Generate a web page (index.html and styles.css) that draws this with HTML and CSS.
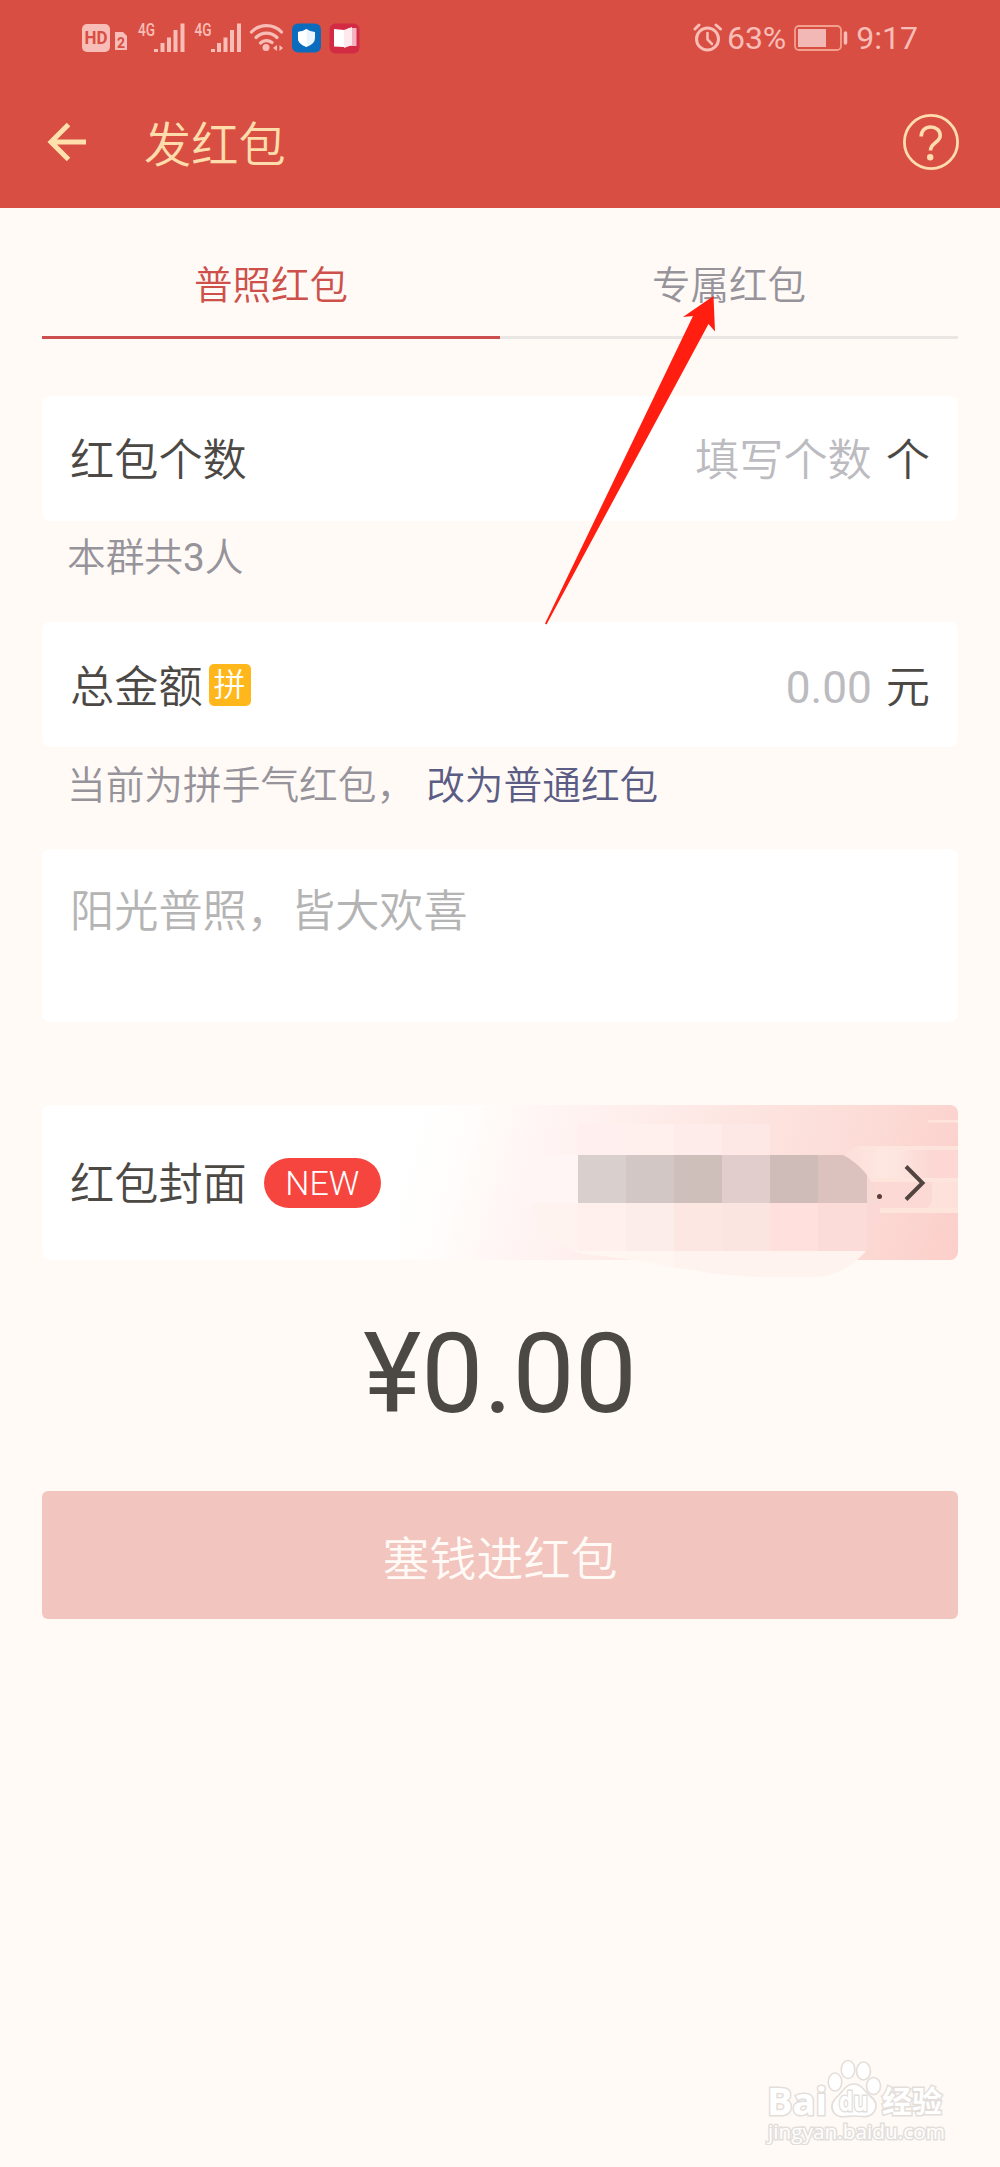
FILE: index.html
```html
<!DOCTYPE html>
<html lang="zh-CN">
<head>
<meta charset="utf-8">
<title>发红包</title>
<link rel="stylesheet" href="styles.css">
</head>
<body>
<div class="screen">
  <header class="header">
    <div class="status">
      <svg class="status-icons" width="300" height="44" viewBox="70 16 300 44">
        <g fill="#f8bdb6">
          <rect x="82" y="24" width="28" height="28" rx="5"/>
          <path d="M115 32h8l4 4v14h-12z"/>
          <path d="M154 49h4v3h-4zM160.500 43h4v9h-4zM167 37.500h4v14.500h-4zM173.500 30h4v22h-4zM180.500 23.500h4v28.500h-4z"/>
          <path d="M211 49h4v3h-4zM217 43h4v9h-4zM223.500 37.500h4v14.500h-4zM230 30h4v22h-4zM237 23.500h4v28.500h-4z"/>
          <circle cx="266" cy="47.500" r="3.500"/>
          <path d="M277 45v6l-4-3zM279.500 45l3.500 3-3.500 3z"/>
        </g>
        <g fill="none" stroke="#f8bdb6" stroke-width="3.200" stroke-linecap="round">
          <path d="M251.500 32a21 21 0 0 1 30 0M256 37.500a15 15 0 0 1 21 0M260.500 43a9 9 0 0 1 11.500-.5"/>
        </g>
        <text class="hd" x="84.500" y="43.500" textLength="23" lengthAdjust="spacingAndGlyphs">HD</text>
        <text class="sim" x="117" y="47.500">2</text>
        <text class="net" x="138" y="35.500" textLength="17" lengthAdjust="spacingAndGlyphs">4G</text>
        <text class="net" x="194.500" y="35.500" textLength="17" lengthAdjust="spacingAndGlyphs">4G</text>
        <rect x="292" y="23.500" width="29" height="29" rx="6" fill="#0b6cbd"/>
        <path d="M306.500 29q4 3 8.500 3v6q0 6-8.500 9-8.500-3-8.500-9v-6q4.500 0 8.500-3z" fill="#e9f5fb"/>
        <path d="M306.500 29q-4 3-8.500 3v6q0 6 8.500 9z" fill="#fff"/>
        <rect x="329.500" y="23.500" width="30" height="30" rx="6" fill="#d42b45"/>
        <path d="M334 29l10 1v17l-10-.5z" fill="#fff"/>
        <path d="M348 28h8.500v18H348z" fill="#f3b3c0"/>
        <path d="M344 30l8-3v18l-8 3z" fill="#fde9ee"/>
      </svg>
      <div class="status-right">
        <svg width="30" height="30" viewBox="0 0 30 30" fill="none" stroke="#f8bdb6" stroke-linecap="round">
          <circle cx="14.500" cy="16" r="11" stroke-width="3"/>
          <path d="M14.500 10v6.500l4.500 4.500" stroke-width="2.600"/>
          <path d="M2 6l4-4M23 2l4.500 4" stroke-width="3"/>
        </svg>
        <span class="percent">63%</span>
        <svg class="battery" width="54" height="26" viewBox="0 0 54 26">
          <rect x="1" y="1" width="46" height="24" rx="4" fill="none" stroke="#f3a08f" stroke-width="1.800"/>
          <rect x="4" y="4" width="28" height="18" fill="#f2b8b5"/>
          <path d="M51.500 8v10" stroke="#f8bdb6" stroke-width="3.500" stroke-linecap="round"/>
        </svg>
        <span class="clock">9:17</span>
      </div>
    </div>
    <div class="nav">
      <svg width="42" height="42" viewBox="0 0 42 42" fill="none" stroke="#ffe0ac" stroke-width="5">
        <path d="M40 21H4M22.500 3.500L5 21l17.500 17.500"/>
      </svg>
      <h1 class="title">发红包</h1>
      <svg class="help" width="58" height="58" viewBox="0 0 58 58" fill="none" stroke="#ffdcab">
        <circle cx="29" cy="29" r="26.600" stroke-width="2.800"/>
        <path d="M19.200 23.500c0-6 4-9.500 9.500-9.500s9.500 3.500 9.500 8.500c0 7-9.700 7.500-9.700 15" stroke-width="3.600"/>
        <circle cx="28.200" cy="44.300" r="3.200" fill="#ffdcab" stroke="none"/>
      </svg>
    </div>
  </header>

  <main class="content">
    <nav class="tabs">
      <span class="tab active">普照红包</span>
      <span class="tab">专属红包</span>
    </nav>

    <section class="card">
      <span>红包个数</span>
      <span class="field"><span class="placeholder">填写个数</span><span>个</span></span>
    </section>
    <p class="note">本群共<span class="num">3</span>人</p>

    <section class="card amount">
      <span class="label">总金额<span class="badge">拼</span></span>
      <span class="field"><span class="placeholder num">0.00</span><span>元</span></span>
    </section>
    <p class="note mode">当前为拼手气红包，<a class="switch">改为普通红包</a></p>

    <section class="card wish"><span class="greeting">阳光普照，皆大欢喜</span></section>

    <section class="card cover">
      <svg class="cover-art" width="916" height="180" viewBox="42 1106 916 180">
        <defs>
          <linearGradient id="blush" gradientUnits="userSpaceOnUse" x1="455" y1="1150" x2="945" y2="1290">
            <stop offset="0" stop-color="#fff6f4" stop-opacity="0"/>
            <stop offset=".18" stop-color="#fff4f3"/>
            <stop offset=".5" stop-color="#fde6e2"/>
            <stop offset=".78" stop-color="#fcdbd6"/>
            <stop offset="1" stop-color="#fccfca"/>
          </linearGradient>
          <linearGradient id="ray" x1="0" x2="1">
            <stop offset="0" stop-color="#fde7e0" stop-opacity=".2"/>
            <stop offset=".3" stop-color="#fde7e0"/>
            <stop offset="1" stop-color="#fde0d9"/>
          </linearGradient>
          <linearGradient id="glow" x1="0" x2="1">
            <stop offset="0" stop-color="#fcd7d3" stop-opacity="0"/>
            <stop offset=".6" stop-color="#fcd7d3"/>
          </linearGradient>
          <linearGradient id="edge" gradientUnits="userSpaceOnUse" x1="400" y1="1170" x2="540" y2="1210">
            <stop offset="0" stop-color="#fffaf6" stop-opacity="0"/>
            <stop offset="1" stop-color="#fffaf6"/>
          </linearGradient>
          <clipPath id="blob">
            <path d="M531 1190C534 1165 545 1145 578 1125L770 1125C800 1138 820 1146 843 1156C866 1168 880 1190 880 1215C880 1250 845 1278 815 1278H755C690 1275 640 1259 590 1256C550 1250 531 1220 531 1190z"/>
          </clipPath>
        </defs>
        <path d="M400 1106H950a8 8 0 0 1 8 8V1253a8 8 0 0 1-8 8H400z" fill="url(#edge)"/>
        <path d="M400 1106H950a8 8 0 0 1 8 8V1253a8 8 0 0 1-8 8H400z" fill="url(#blush)"/>
        <path d="M845 1155Q853 1147 862 1147H958V1214H845z" fill="url(#ray)"/>
        <path d="M958 1151H910q-12 0-12 12v16h60z" fill="url(#glow)"/>
        <path d="M870 1183h62v15q0 13-14 13H870z" fill="#fcd9d5"/>
        <path d="M928 1121h30v2.500h-30zM860 1147.500h98v2h-98zM865 1179h93v4h-93zM872 1209h86v5h-86z" fill="#fde5dc"/>
        <g clip-path="url(#blob)">
          <path d="M578 1125h48v31h-48z" fill="#fff0ef"/>
          <path d="M626 1125h48v31h-48z" fill="#fff0ee"/>
          <path d="M674 1125h48v31h-48z" fill="#feeceb"/>
          <path d="M722 1125h48v31h-48z" fill="#fde8e5"/>
          <path d="M530 1156h48v48h-48z" fill="#fff5f4"/>
          <path d="M530 1204h48v56h-48z" fill="#fff3f0"/>
          <path d="M578 1156h48v48h-48z" fill="#d9d0cd"/>
          <path d="M626 1156h48v48h-48z" fill="#d2c7c4"/>
          <path d="M674 1156h48v48h-48z" fill="#cebfbb"/>
          <path d="M722 1156h48v48h-48z" fill="#e1cdcc"/>
          <path d="M770 1156h48v48h-48z" fill="#cfbbb8"/>
          <path d="M818 1156h49v48h-49z" fill="#dbc2be"/>
          <path d="M867 1156h20v48h-20z" fill="#f8dad5"/>
          <path d="M578 1204h48v48h-48z" fill="#ffefed"/>
          <path d="M626 1204h48v48h-48z" fill="#fcedea"/>
          <path d="M674 1204h48v48h-48z" fill="#fde7e3"/>
          <path d="M722 1204h48v48h-48z" fill="#fbe5e0"/>
          <path d="M770 1204h48v48h-48z" fill="#ffe0dc"/>
          <path d="M818 1204h49v48h-49z" fill="#fbdcd8"/>
          <path d="M867 1204h20v48h-20z" fill="#fbd8d4"/>
          <path d="M570 1252h104v30H570z" fill="#fff6f1"/>
          <path d="M674 1252h206v30H674z" fill="#fff3ef"/>
        </g>
      </svg>
      <span class="label">红包封面<span class="new">NEW</span></span>
      <span class="more">
        <span class="dot"></span>
        <svg width="22" height="38" viewBox="0 0 22 38" fill="none" stroke="#524440" stroke-width="4">
          <path d="M2 2.500L18.500 19 2 35.500"/>
        </svg>
      </span>
    </section>

    <div class="total">¥0.00</div>
    <button class="submit" type="button">塞钱进红包</button>
  </main>

  <svg class="pointer" width="172" height="330" viewBox="544 295 172 330">
    <path d="M713.500 296L715 331.500 708.500 324 546.500 624.500 545 623.500 693 316 683 317z" fill="#ff1e10"/>
  </svg>

  <svg class="watermark" width="190" height="90" viewBox="760 2055 190 90">
    <g fill="#fff" stroke="#e3deda" stroke-width="1.600">
      <ellipse cx="835" cy="2082" rx="6.800" ry="9"/>
      <ellipse cx="848" cy="2069.500" rx="6.800" ry="9"/>
      <ellipse cx="863.500" cy="2071" rx="7" ry="9"/>
      <ellipse cx="873.500" cy="2086" rx="7" ry="8.500"/>
      <path d="M854 2084c8 0 10 7 16 12 7 5 7 11 4 16-5 7-13 4-20 4s-15 3-20-3c-4-6-2-12 4-17 6-6 8-12 16-12z"/>
      <text class="wm-logo" x="767" y="2115" textLength="60" lengthAdjust="spacingAndGlyphs">Bai</text>
      <text class="wm-du" x="839" y="2111" textLength="29" lengthAdjust="spacingAndGlyphs">du</text>
      <text class="wm-cn" x="882" y="2112">经验</text>
      <text class="wm-url" x="768" y="2139" textLength="177" lengthAdjust="spacingAndGlyphs">jingyan.baidu.com</text>
    </g>
  </svg>
</div>
</body>
</html>
```

FILE: styles.css
```css
* { box-sizing: border-box; }

body {
  margin: 0;
  background: #fffaf6;
  color: #4c4945;
  font-family: Roboto, "Noto Sans CJK SC", sans-serif;
  font-weight: 350;
}

.screen {
  position: relative;
  height: 2167px;
  overflow: hidden;
}

.num { font-weight: 400; }

/* Header */
.header {
  height: 208px;
  background: #d84e43;
}

.status {
  display: flex;
  justify-content: space-between;
  height: 76px;
  padding: 16px 82px 0 70px;
}

.status-right {
  display: flex;
  align-items: center;
  height: 44px;
  color: #f8bdb6;
  font-size: 32px;
  font-weight: 400;
}

.percent { margin-left: 4px; }
.battery { margin: 0 8px 0 8px; }

.status-icons text { font-family: Roboto, sans-serif; }
.hd { font-size: 18px; font-weight: 700; fill: #d84e43; }
.sim { font-size: 14px; font-weight: 700; fill: #d84e43; }
.net { font-size: 18px; font-weight: 500; fill: #f8bdb6; }

.nav {
  display: flex;
  align-items: center;
  height: 132px;
  padding: 0 40px 0 46px;
}

.nav > svg { margin-top: -1px; }

.title {
  margin: 0 0 0 56px;
  padding-top: 7px;
  color: #ffdcab;
  font-size: 47.200px;
  font-weight: 350;
  line-height: 60px;
}

.nav .help { margin-left: auto; }

/* Form */
.content { padding: 0 42px; }

.tabs {
  display: grid;
  grid-template-columns: 1fr 1fr;
  height: 131px;
  margin-bottom: 57px;
}

.tab {
  padding-top: 48px;
  border-bottom: 3px solid #e9e6e4;
  color: #96939b;
  font-size: 38.500px;
  line-height: 60px;
  text-align: center;
}

.tab.active {
  border-color: #cb4f4f;
  color: #cd504a;
}

.card {
  display: flex;
  align-items: center;
  justify-content: space-between;
  height: 125px;
  padding: 5px 28px 0;
  border-radius: 8px;
  background: #fff;
  font-size: 44.200px;
  line-height: 60px;
}

.amount { padding-top: 6px; }

.field { display: flex; gap: 14px; }
.placeholder { color: #bcbbbf; }

.label { display: flex; align-items: center; }

.badge {
  width: 42px;
  height: 42px;
  margin: -5px 0 0 6px;
  border-radius: 5px;
  background: #ffb71b;
  color: #fff;
  font-size: 32px;
  line-height: 43px;
  text-align: center;
}

.note {
  height: 101px;
  margin: 0;
  padding: 7px 25px 0;
  color: #96939b;
  font-size: 38.700px;
  line-height: 60px;
}

.mode { padding-top: 9px; }

.switch { margin-left: 11px; color: #5b5d84; }

.wish {
  align-items: flex-start;
  height: 173px;
  margin-top: 1px;
  padding-top: 33px;
}

.greeting { color: #b5b4b4; }

.cover {
  position: relative;
  height: 155px;
  margin-top: 83px;
}

.cover-art {
  position: absolute;
  top: 0;
  left: 0;
}

.cover .label, .more { position: relative; }

.new {
  width: 117px;
  height: 50px;
  margin: -5px 0 0 17px;
  border-radius: 25px;
  background: #f6453e;
  color: #fff;
  font-size: 34px;
  line-height: 51px;
  text-align: center;
}

.more {
  display: flex;
  align-items: center;
  gap: 22px;
  margin-top: -5px;
  padding-right: 4px;
}

.dot {
  width: 5px;
  height: 5px;
  margin-top: 28px;
  border-radius: 50%;
  background: #5b3d39;
}

.total {
  height: 231px;
  padding-top: 49px;
  font-size: 110.500px;
  font-weight: 400;
  line-height: 130px;
  text-align: center;
}

.submit {
  display: block;
  width: 100%;
  height: 128px;
  padding: 0;
  border: 0;
  border-radius: 6px;
  background: #f2c5be;
  color: #fffaf6;
  font: inherit;
  font-size: 47px;
}

/* Overlays */
.pointer {
  position: absolute;
  top: 295px;
  left: 544px;
}

.watermark {
  position: absolute;
  top: 2055px;
  left: 760px;
}

.watermark text {
  font-family: "Open Sans", "Noto Sans CJK SC", sans-serif;
  paint-order: stroke;
  stroke-width: 3px;
}

.wm-logo { font-size: 38px; font-weight: 700; }
.wm-du { font-size: 27px; font-weight: 700; }
.wm-cn { font-size: 30px; font-weight: 700; }
.wm-url { font-size: 20px; font-weight: 400; }
```
